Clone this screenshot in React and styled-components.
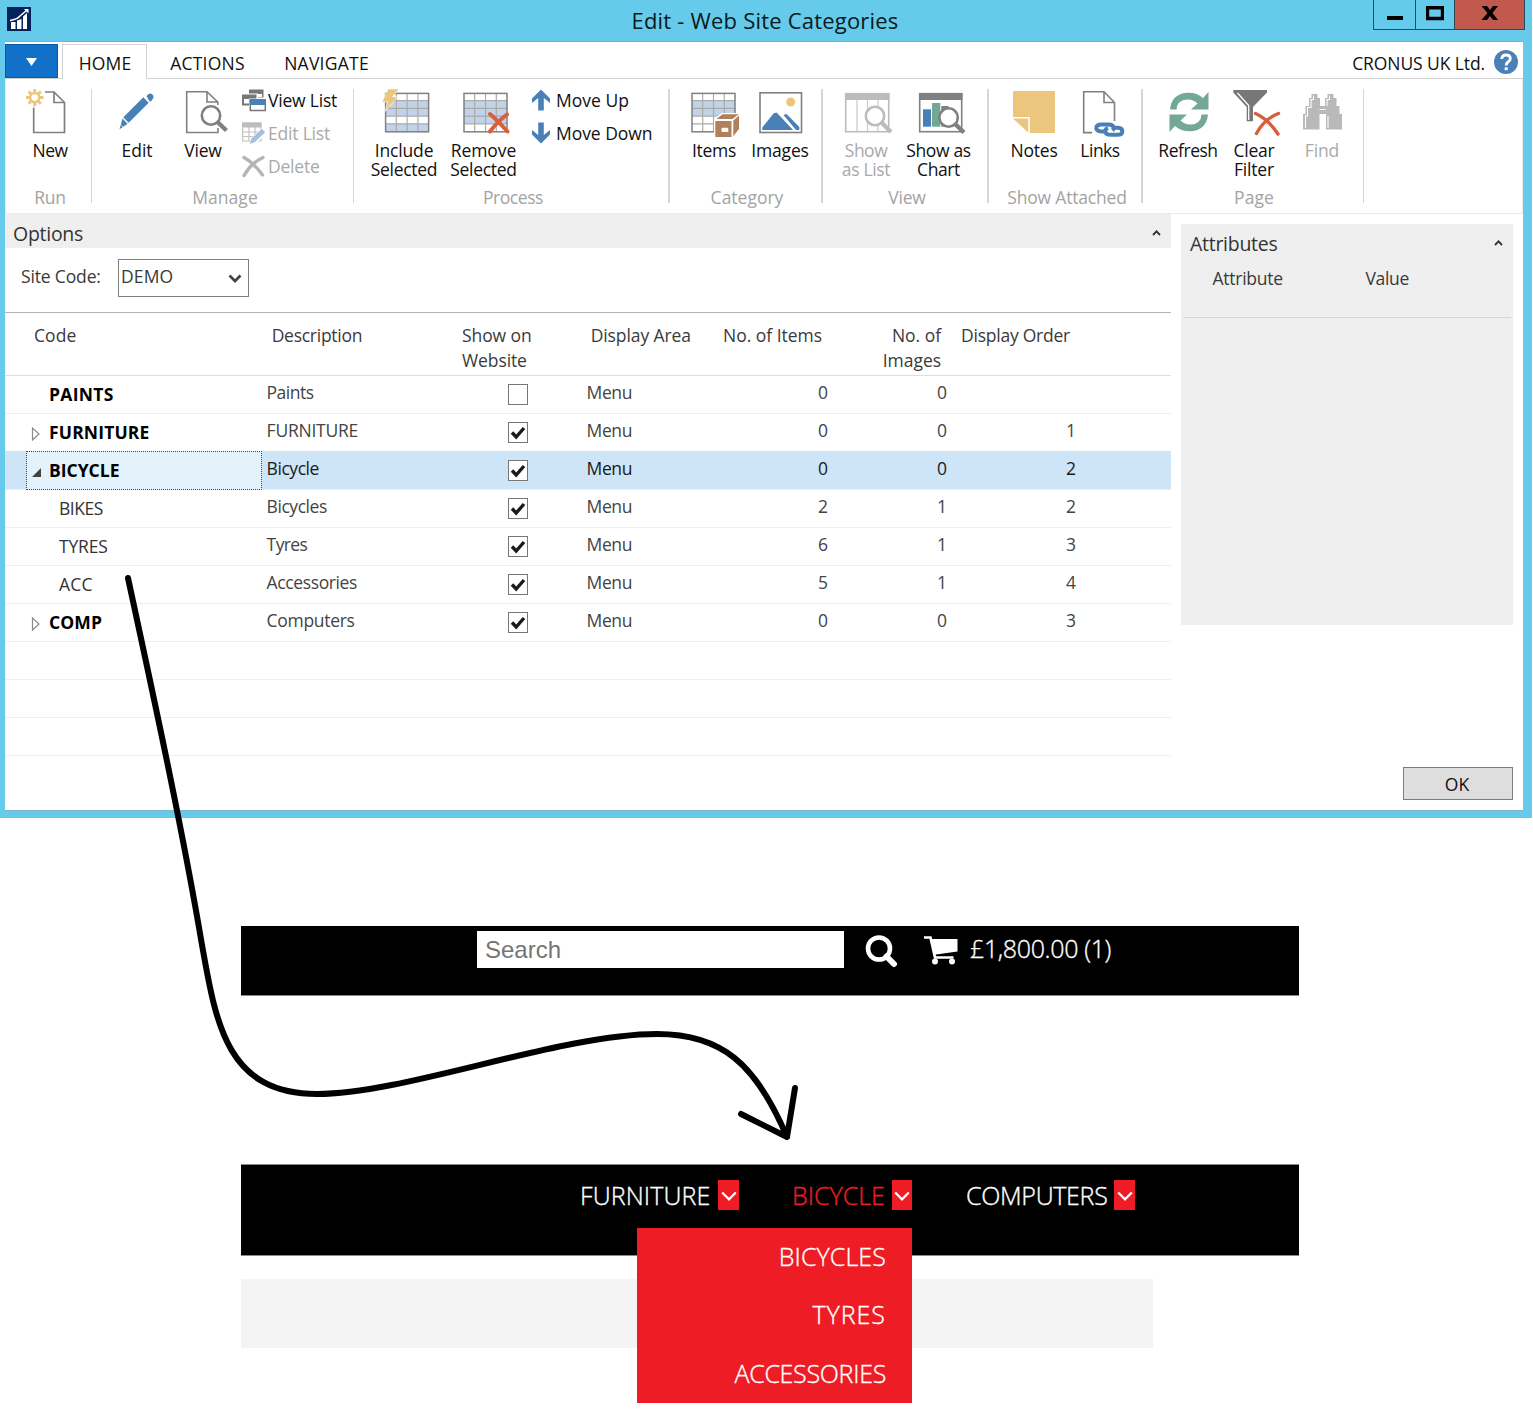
import React from 'react';
import styled, { createGlobalStyle, css } from 'styled-components';

const Global = createGlobalStyle`
  *, *::before, *::after { box-sizing: border-box; }
  body { margin: 0; background: #fff; }
  button, input { font: inherit; color: inherit; }
  svg { display: block; }
`;

const blue = '#4a80b8';
const grey = '#808080';
const sand = '#edc67e';
const red = '#d95f3c';
const pale = '#c0d3e8';

const Page = styled.div`
  position: relative;
  width: 1533px;
  height: 1414px;
  overflow: hidden;
  background: #fff;
  font-family: 'Open Sans', 'Noto Sans', sans-serif;
  font-size: 17.5px;
  color: #111;
`;

/* ---------- window chrome ---------- */

const Window = styled.section`
  width: 1532px;
  height: 818px;
  padding: 0 9px 7px 5px;
  background: #66caea;
  display: flex;
  flex-direction: column;
`;

const TitleBar = styled.header`
  height: 41px;
  flex: none;
  display: grid;
  grid-template-columns: 200px 1fr 200px;
  margin-right: -2px;
`;

const AppIcon = styled.svg`
  margin: 7px 0 0 2px;
`;

const Title = styled.h1`
  margin: 0;
  font-size: 22px;
  font-weight: 400;
  line-height: 41px;
  letter-spacing: 0.2px;
  text-align: center;
  color: #0a1a20;
`;

const WindowButtons = styled.div`
  display: flex;
  justify-content: flex-end;
  height: 30px;
`;

const WindowButton = styled.button`
  width: ${(p) => p.$w}px;
  height: 30px;
  padding: 0;
  border: 1px solid #2f4a55;
  border-top: 0;
  margin-left: -1px;
  background: ${(p) => (p.$close ? '#c1594f' : 'transparent')};
  display: flex;
  justify-content: center;
`;

const Client = styled.main`
  flex: 1;
  border-top: 1px solid #8fa9b8;
  border-bottom: 1px solid #7fb6cc;
  background: #fff;
  display: flex;
  flex-direction: column;
`;

/* ---------- ribbon ---------- */

const Tabs = styled.nav`
  display: flex;
  height: 37px;
  border-bottom: 1px solid #d2d2d2;
  padding-top: 2px;
`;

const FileTab = styled.button`
  width: 53px;
  height: 34px;
  border: 1px solid #0a5aa8;
  background: #1170c8;
  padding: 0;
  display: flex;
  justify-content: center;
`;

const Tab = styled.button`
  width: ${(p) => p.$w}px;
  height: 35px;
  padding: 0 0 0 1px;
  border: 0;
  background: none;
  line-height: 39px;
  letter-spacing: ${(p) => p.$ls}px;
  text-align: center;
  ${(p) =>
    p.$active &&
    css`
      margin-left: 4px;
      border: 1px solid #d2d2d2;
      border-bottom: 0;
      background: #fff;
      line-height: 37px;
    `}
`;

const Company = styled.div`
  margin-left: auto;
  padding-right: 5px;
  display: flex;
  gap: 9px;
  line-height: 38px;
  letter-spacing: -0.1px;
`;

const HelpIcon = styled.svg`
  margin-top: 6px;
`;

const Ribbon = styled.div`
  display: flex;
  height: 135px;
  flex: none;
  padding-top: 10px;
  border: 1px solid #e9e9e9;
  border-top: 0;
`;

const Group = styled.div`
  width: ${(p) => p.$w}px;
  height: 114px;
  border-right: ${(p) => p.$line || 1}px solid #d6d6d6;
  display: flex;
  flex-direction: column;
`;

const GroupItems = styled.div`
  display: flex;
  flex: none;
  height: 97px;
  padding-left: ${(p) => p.$pad}px;
`;

const GroupName = styled.div`
  line-height: 23px;
  color: #a3a3a3;
  text-align: center;
  padding-left: ${(p) => p.$shift || 0}px;
  letter-spacing: ${(p) => p.$ls || 0}px;
`;

const BigButton = styled.button`
  width: ${(p) => p.$w}px;
  padding: 0;
  border: 0;
  background: none;
  display: flex;
  flex-direction: column;
  align-items: center;
  line-height: 19px;
  color: ${(p) => (p.$off ? '#a9a9a9' : '#111')};
  margin-top: -3px;

  svg {
    flex: none;
    margin-bottom: 1px;
  }
`;

const ButtonLine = styled.span`
  white-space: nowrap;
  letter-spacing: ${(p) => p.$ls}px;
`;

const Stack = styled.div`
  display: flex;
  flex-direction: column;
  margin: -5.5px 0 0 ${(p) => p.$ml}px;
`;

const SmallButton = styled.button`
  height: 33px;
  padding: 0;
  border: 0;
  background: none;
  display: flex;
  align-items: center;
  gap: 2px;
  letter-spacing: ${(p) => p.$ls}px;
  color: ${(p) => (p.$off ? '#a9a9a9' : '#111')};
`;

/* ---------- page body ---------- */

const Body = styled.div`
  display: flex;
  flex: 1;
`;

const ListPane = styled.div`
  width: 1166px;
`;

const PaneHeader = styled.div`
  display: flex;
  justify-content: space-between;
  height: 34px;
  padding: 0 10px 0 ${(p) => p.$pl}px;
  background: #efefef;
  font-size: 19.5px;
  line-height: ${(p) => p.$lh}px;
  letter-spacing: -0.27px;
  color: #333;
`;

const CaretIcon = styled.svg`
  margin-top: 16px;
`;

const Filters = styled.div`
  display: flex;
  height: 64px;
  padding: 11px 0 0 16px;
  color: #3a3a3a;
`;

const FilterLabel = styled.label`
  width: 97px;
  line-height: 35px;
  letter-spacing: -0.15px;
`;

const Select = styled.div`
  display: flex;
  justify-content: space-between;
  width: 131px;
  height: 38px;
  padding: 0 6px 0 2px;
  border: 1px solid #7d7d7d;
  line-height: 33px;
  letter-spacing: 0.15px;
`;

const SelectArrow = styled.svg`
  margin-top: 14px;
`;

const columns = css`
  display: grid;
  grid-template-columns: 257px 195px 120px 131px 120px 119px 129px 1fr;
`;

const HeadRow = styled.div`
  ${columns}
  height: 63px;
  padding-top: 10px;
  border-top: 1px solid #b4b4b4;
  line-height: 25px;
  color: #3a3a3a;
`;

const HeadCell = styled.div`
  padding-left: ${(p) => p.$pl || 0}px;
  padding-right: ${(p) => p.$pr || 0}px;
  text-align: ${(p) => (p.$right ? 'right' : 'left')};
  letter-spacing: ${(p) => p.$ls || 0}px;
  white-space: nowrap;
`;

const Row = styled.div`
  ${columns}
  height: 38px;
  border-top: 1px solid ${(p) => (p.$first ? '#dedede' : '#efefef')};
  line-height: 33px;
  color: ${(p) => (p.$selected ? '#1a1a1a' : '#444')};
  ${(p) =>
    p.$selected &&
    css`
      border-top-color: #cbe4f6;
      background: #cde5f7;
    `}
`;

const CodeCell = styled.div`
  display: flex;
  margin: -1px 0 0 21px;
  height: 39px;
  border: 1px ${(p) => (p.$focus ? 'dotted #444' : 'solid transparent')};
  background: ${(p) => (p.$focus ? '#e4f2fb' : 'transparent')};
  line-height: 36px;
`;

const Expander = styled.svg`
  width: 14px;
  height: 16px;
  margin: 11px 5px 0 3px;
`;

const Code = styled.span`
  margin-left: ${(p) => (p.$child ? 10 : 0)}px;
  font-weight: ${(p) => (p.$child ? 400 : 700)};
  color: ${(p) => (p.$child ? '#333' : '#000')};
  letter-spacing: ${(p) => p.$ls}px;
`;

const Cell = styled.div`
  padding-left: ${(p) => p.$pl || 0}px;
  text-align: ${(p) => (p.$right ? 'right' : 'left')};
  letter-spacing: ${(p) => p.$ls || 0}px;
`;

const CheckBox = styled.span`
  display: block;
  width: 20px;
  height: 21px;
  margin: 8px 0 0 51px;
  border: 1px solid #777;
  background: #fff;
`;

const LastLine = styled.div`
  height: 1px;
  background: #efefef;
`;

const SidePane = styled.aside`
  flex: 1;
  padding: 10px 10px 10px 10px;
  display: flex;
  flex-direction: column;
  justify-content: space-between;
  align-items: flex-end;
`;

const FactBox = styled.div`
  width: 332px;
  height: 401px;
  background: #efefef;
`;

const FactHead = styled.div`
  display: grid;
  grid-template-columns: 153px 1fr;
  margin: 0 2px 0 2px;
  padding: 7px 0 0 29.5px;
  height: 60px;
  border-bottom: 1px solid #d6d6d6;
  line-height: 27px;
  color: #3a3a3a;
`;

const OkButton = styled.button`
  width: 110px;
  height: 33px;
  padding: 0 2px 0 0;
  border: 1px solid #7c7c7c;
  background: #dedede;
  line-height: 33px;
`;

/* ---------- web shop ---------- */

const ShopTop = styled.section`
  display: flex;
  width: 1058px;
  height: 70px;
  margin: 108px 0 0 241px;
  padding: 5px 0 0 236px;
  background: #000;
  border-bottom: 1px solid #888;
  color: #fff;
`;

const SearchInput = styled.input`
  width: 367px;
  height: 37px;
  border: 0;
  padding: 0 8px;
  background: #fff;
  font-family: 'Liberation Sans', Arial, sans-serif;
  font-size: 24px;
  line-height: 36px;

  &::placeholder {
    color: #757575;
    opacity: 1;
  }
`;

const SearchIcon = styled.svg`
  margin: 3px 0 0 20px;
`;

const CartIcon = styled.svg`
  margin: 5px 0 0 26px;
`;

const CartTotal = styled.span`
  margin-left: 12px;
  font-size: 25px;
  line-height: 35px;
  font-weight: 300;
  letter-spacing: -0.35px;
  -webkit-text-stroke: 0.35px currentColor;
`;

const ShopNav = styled.nav`
  display: flex;
  width: 1058px;
  height: 92px;
  margin: 168px 0 0 241px;
  padding: 15px 0 0 340px;
  background: #000;
  border: solid #888;
  border-width: 1px 0;
`;

const NavItem = styled.div`
  position: relative;
  display: flex;
  justify-content: space-between;
  width: ${(p) => p.$w}px;
  height: 30px;
  margin-right: ${(p) => p.$gap || 0}px;
  font-size: 25px;
  font-weight: 300;
  line-height: 31px;
  letter-spacing: ${(p) => p.$ls}px;
  color: ${(p) => (p.$open ? '#ee1c25' : '#fff')};
  white-space: nowrap;
  -webkit-text-stroke: 0.35px currentColor;
`;

const NavLabel = styled.span`
  margin-left: -1px;
`;

const Toggle = styled.span`
  width: ${(p) => p.$w}px;
  height: 30px;
  background: #ee1c25;
  display: flex;
  justify-content: center;
`;

const ToggleArrow = styled.svg`
  margin-top: 11px;
`;

const Dropdown = styled.div`
  position: absolute;
  z-index: 2;
  top: 48px;
  right: 0;
  width: 275px;
  height: 175px;
  background: #ee1c25;
  color: #fff;
  display: grid;
  grid-template-rows: repeat(3, 58.4px);
  padding-right: 26px;
  line-height: 56px;
  text-align: right;
  -webkit-text-stroke: 0.35px #fff;
`;

const MenuLink = styled.span`
  letter-spacing: ${(p) => p.$ls}px;
`;

const ShopStrip = styled.div`
  width: 912px;
  height: 69px;
  margin: 23px 0 0 241px;
  background: #f4f4f4;
`;

const Pointer = styled.svg`
  position: absolute;
  z-index: 3;
  top: 560px;
  left: 110px;
  pointer-events: none;
`;

/* ---------- drawings ---------- */

const Big = ({ children }) => (
  <svg width="56" height="54" viewBox="0 0 56 54" overflow="visible" fill="none">
    {children}
  </svg>
);

const Small = ({ children }) => (
  <svg width="24" height="24" viewBox="0 0 24 24" fill="none">
    {children}
  </svg>
);

const Lens = ({ x, y, c = grey, tx, ty }) => (
  <g stroke={c}>
    <circle cx={x} cy={y} r="9.2" strokeWidth="2.6" fill="#fff" />
    <path d={`M${x + 6.5} ${y + 6.5}L${tx} ${ty}`} strokeWidth="4.4" />
  </g>
);

const Sheet = ({ x, blueRows }) => (
  <g>
    <rect x={x} y="7" width="43" height="38.6" fill="#fff" />
    {blueRows.map((r) => (
      <rect key={r} x={x} y={7 + r * 7.7} width="43" height="7.7" fill={pale} />
    ))}
    <path
      d={`M${x + 10.7} 7v38.6m10.8-38.6v38.6m10.8-38.6v38.6M${x} 14.7h43m-43 7.7h43m-43 7.7h43m-43 7.7h43`}
      stroke="#ababab"
      strokeWidth="1.2"
    />
    <rect x={x} y="7.4" width="43" height="38.4" stroke={grey} strokeWidth="1.5" />
  </g>
);

const icons = {
  New: (
    <Big>
      <path d="M23 6H32L42.500 16.500V46.500H11.700V21.500M32 6V16.500H42.500" stroke={grey} strokeWidth="1.7" />
      <g stroke={sand}>
        <circle cx="12.700" cy="11.600" r="4.600" strokeWidth="2.600" />
        <path d="M12.700 3v4m0 9.200v4M4 11.600h4m9.400 0h4M6.600 5.500l2.900 2.900m6.400 6.400l2.900 2.900M6.600 17.700l2.900-2.900m6.400-6.400l2.900-2.900" strokeWidth="3" />
      </g>
    </Big>
  ),
  Edit: (
    <Big>
      <path d="M37 14L17 34" stroke={blue} strokeWidth="7.600" />
      <path d="M37.500 10L40 7.700Q43 6.500 44.500 10Q45 12.500 42.600 14.800L40.800 15.900Z M13.600 32L19 37.600L10.500 43.300Z" fill={blue} />
      <path d="M35.600 10.600L42 17M12.400 31.200L19.600 38.400" stroke="#fff" strokeWidth=".8" />
      <path d="M11.600 38.600L15.600 42.300" stroke="#fff" strokeWidth=".6" />
    </Big>
  ),
  View: (
    <Big>
      <path d="M42.800 19V16L32 5.700H11.700V46.500H43V42M32 5.700V16H42.800" stroke={grey} strokeWidth="1.600" />
      <Lens x={36} y={29.500} tx={51.500} ty={44.500} />
    </Big>
  ),
  Include: (
    <Big>
      <Sheet x={9.600} blueRows={[1, 2, 4]} />
      <path d="M12 3H23L16.500 10.700H22L9 25.500L11.500 16H6Z" fill={sand} stroke="#fff" strokeWidth=".6" />
    </Big>
  ),
  Remove: (
    <Big>
      <Sheet x={8} blueRows={[1, 2, 3]} />
      <path d="M34 28Q42 35 51.500 45.500M51 28.500Q42 35 34 45.500" stroke={red} strokeWidth="4" strokeLinecap="round" />
    </Big>
  ),
  Items: (
    <Big>
      <Sheet x={6} blueRows={[1, 2]} />
      <path d="M28 33L36 27H54V43L46 52H28Z" fill="#fff" />
      <path d="M29.300 35H45.500V51H29.300ZM30.500 33L36.500 28.300H52.700L46.500 33ZM47.300 34.500L53 29.500V43L47.300 50.300Z" fill="#b0805a" />
      <path d="M36 42.300H41.800V45.500H36Z" fill="#fff" stroke="#fff" />
    </Big>
  ),
  Images: (
    <Big>
      <rect x="8" y="6.800" width="41.500" height="39.700" stroke={grey} strokeWidth="1.600" />
      <circle cx="38.700" cy="16" r="4.500" fill={sand} />
      <path d="M10.300 44V41.500L21.500 27.500L24.500 26.500L28 30L41 44Z M31.500 29L34.500 28L37 30.500L47.300 41V44H44Z" fill={blue} />
    </Big>
  ),
  List: (
    <Big>
      <path d="M19 14V45M29.500 14V45M40 14V45" stroke="#cdcdcd" strokeWidth="1.300" />
      <rect x="7.700" y="7.700" width="43" height="38" stroke="#bcbcbc" strokeWidth="1.600" />
      <path d="M7 7H51.500V14H7Z" fill="#bcbcbc" />
      <Lens x={37} y={30} tx={53} ty={46} c="#bcbcbc" />
    </Big>
  ),
  Chart: (
    <Big>
      <rect x="8.700" y="7.700" width="42" height="38" stroke={grey} strokeWidth="1.600" />
      <path d="M8 7H51.500V14H8Z" fill={grey} />
      <path d="M12 23.300H20V40.700H12Z" fill={blue} />
      <path d="M21 17H29.300V40.700H21Z" fill="#74a896" />
      <path d="M30.300 20H37.500V40.700H30.300Z" fill={grey} />
      <Lens x={37.600} y={31.500} tx={53} ty={46.500} />
    </Big>
  ),
  Notes: (
    <Big>
      <path d="M7 5H49V47H23.500V31.700H7Z" fill={sand} />
      <path d="M7 32.500H22.500V47Z" fill={sand} />
      <path d="M7 31.500H23V47" stroke="#fff" strokeWidth="1.200" />
    </Big>
  ),
  Links: (
    <Big>
      <path d="M20 46.600H11.700V5.700H32L42.500 16.500V35M32 5.700V16.500H42.500" stroke={grey} strokeWidth="1.600" />
      <g stroke={blue} strokeWidth="4">
        <path d="M33.500 45.500H29.500Q24.300 45 24.300 42Q24.300 38.500 29.500 38.500H36.500Q41.500 38.500 41.500 42Q41.500 43.500 40.500 44.500" />
        <path d="M43 41.800H46Q50.300 42 50.300 45.300Q50.300 48.800 45.500 48.800H39Q33.500 48.800 33.300 45.300Q33.300 43 36 42" />
      </g>
    </Big>
  ),
  Refresh: (
    <Big>
      <g fill="#74a896">
        <path d="M10 23.500Q11.500 8 27 6.700Q37 6.300 43 12L48.500 6V23.500H31L37.500 17.500Q33 13 26.500 13.500Q17 14.500 16.500 23.500Z" />
        <path d="M48 28.500Q46.500 44 31 45.300Q21 45.700 15 40L9.500 46V28.500H27L20.500 34.500Q25 39 31.500 38.500Q41 37.500 41.500 28.500Z" />
      </g>
    </Big>
  ),
  Clear: (
    <Big>
      <path d="M7.300 4H41V6.500L27 21V35.300H20.700V21L7.300 6.500Z" fill="#777" />
      <path d="M11.500 7L22.700 19.500V34" stroke="#fff" strokeWidth="1.300" />
      <path d="M29.500 27.500Q42 33 52 48M52.500 27.500Q38 33 30.500 47.500" stroke={red} strokeWidth="3.400" strokeLinecap="round" />
    </Big>
  ),
  Find: (
    <Big>
      <path
        d="M17.500 8H23.500V12H26V20H31V12H33.500V8H39.500V12H42.500V20H45.500V28H48V43.500H32V28H25.500V43.500H9V28H11.500V20H15V12H17.500Z"
        fill="#b9b9b9"
      />
      <path d="M11.500 42V30H13.500V21.500H17V13.500H19.500V9.500M34 42V30M33 20V13.500H35.500V9.500M25.500 23.500H31.500" stroke="#fff" strokeWidth="1.100" />
    </Big>
  ),
  ViewList: (
    <Small>
      <path d="M7 1.500H21.500V9.500H16V5.500H7ZM0 6.500H14.500V10.500H7V17.500H0Z" fill="#777" />
      <path d="M16 6H20V9H16ZM2 11H7V15.500H2Z" fill="#fff" />
      <rect x="8.300" y="11.800" width="15" height="10.700" fill="#fff" stroke="#777" strokeWidth="1.500" />
      <path d="M7.600 11H24V17H7.600Z" fill={blue} />
    </Small>
  ),
  EditList: (
    <Small>
      <path d="M.7 2H19V20H.7ZM.7 11H19M.7 15.500H19M7 6V20M13 6V20" stroke="#c2c2c2" strokeWidth="1.200" />
      <path d="M0 1.500H19.500V6.500H0Z" fill="#bdbdbd" />
      <path d="M22.500 9L10 21.500" stroke="#fff" strokeWidth="7" />
      <path d="M21.500 9.500L11 19.500" stroke="#a5c0dd" strokeWidth="5" />
      <path d="M7.500 23L9.500 17.500L13 21Z" fill="#a5c0dd" />
    </Small>
  ),
  Delete: (
    <Small>
      <path d="M2 3.500Q12 9 20.500 21M21 3.500Q9 9 2 21.500" stroke="#b5b5b5" strokeWidth="3.300" strokeLinecap="round" />
    </Small>
  ),
  Up: (
    <Small>
      <path d="M11 1.500L20 10.500V15L13.800 10V22.500H8.200V10L2 15V10.500Z" fill={blue} />
    </Small>
  ),
  Down: (
    <Small>
      <path d="M11 22.500L20 13.500V9L13.800 14V1.500H8.200V14L2 9V13.500Z" fill={blue} />
    </Small>
  ),
};

const Caret = () => (
  <CaretIcon width="9" height="6" viewBox="0 0 9 6" fill="none">
    <path d="M1 5L4.500 1.400L8 5" stroke="#333" strokeWidth="1.800" />
  </CaretIcon>
);

const Chevron = () => (
  <ToggleArrow width="16" height="10" viewBox="0 0 16 10" fill="none">
    <path d="M1.200 1.500L8 8.300L14.800 1.500" stroke="#fff" strokeWidth="2.300" />
  </ToggleArrow>
);

/* ---------- data ---------- */

const groups = [
  { name: 'Run', w: 86, pad: 6, big: [{ icon: 'New', w: 76, lines: [['New', -0.5]] }], ls: -0.2, shift: 3 },
  {
    name: 'Manage', w: 262, pad: 12, ls: 0.05, shift: 5,
    big: [
      { icon: 'Edit', w: 66, lines: [['Edit', 0]] },
      { icon: 'View', w: 66, lines: [['View', -0.2]] },
    ],
    gap: 6,
    small: [
      { icon: 'ViewList', text: 'View List', ls: -0.2 },
      { icon: 'EditList', text: 'Edit List', ls: -0.2, off: true },
      { icon: 'Delete', text: 'Delete', ls: -0.2, off: true },
    ],
  },
  {
    name: 'Process', w: 316, pad: 10, ls: -0.45, shift: 4, line: 2,
    big: [
      { icon: 'Include', w: 80, lines: [['Include', -0.14], ['Selected', -0.3]] },
      { icon: 'Remove', w: 79, lines: [['Remove', -0.1], ['Selected', -0.3]] },
    ],
    gap: 7,
    small: [
      { icon: 'Up', text: 'Move Up', ls: 0 },
      { icon: 'Down', text: 'Move Down', ls: -0.05 },
    ],
  },
  {
    name: 'Category', w: 153, pad: 11, ls: 0, shift: 3, line: 2,
    big: [
      { icon: 'Items', w: 66, lines: [['Items', -0.29]] },
      { icon: 'Images', w: 66, lines: [['Images', -0.15]] },
    ],
  },
  {
    name: 'View', w: 166, pad: 7, ls: -0.23, shift: 4, line: 2,
    big: [
      { icon: 'List', w: 72, off: true, lines: [['Show', -0.5], ['as List', -0.35]] },
      { icon: 'Chart', w: 73, lines: [['Show as', -0.35], ['Chart', -0.4]] },
    ],
  },
  {
    name: 'Show Attached', w: 154, pad: 12, ls: -0.18, shift: 4, line: 2,
    big: [
      { icon: 'Notes', w: 66, lines: [['Notes', -0.19]] },
      { icon: 'Links', w: 66, lines: [['Links', -0.5]] },
    ],
  },
  {
    name: 'Page', w: 221, pad: 12, ls: 0.08, shift: 2,
    big: [
      { icon: 'Refresh', w: 66, lines: [['Refresh', -0.47]] },
      { icon: 'Clear', w: 66, lines: [['Clear', -0.25], ['Filter', -0.19]] },
      { icon: 'Find', w: 70, off: true, lines: [['Find', -0.15]] },
    ],
  },
];

const rows = [
  { code: 'PAINTS', cls: 0.3, text: 'Paints', ls: -0.5, shown: false, items: 0, images: 0, order: '' },
  { code: 'FURNITURE', cls: 0.15, text: 'FURNITURE', ls: -0.23, shown: true, items: 0, images: 0, order: 1, node: 'closed' },
  { code: 'BICYCLE', cls: 0, text: 'Bicycle', ls: -0.45, shown: true, items: 0, images: 0, order: 2, node: 'open', selected: true },
  { code: 'BIKES', cls: -0.45, text: 'Bicycles', ls: -0.45, shown: true, items: 2, images: 1, order: 2, child: true },
  { code: 'TYRES', cls: -0.15, text: 'Tyres', ls: -0.6, shown: true, items: 6, images: 1, order: 3, child: true },
  { code: 'ACC', cls: 0.2, text: 'Accessories', ls: -0.38, shown: true, items: 5, images: 1, order: 4, child: true },
  { code: 'COMP', cls: 0.14, text: 'Computers', ls: -0.3, shown: true, items: 0, images: 0, order: 3, node: 'closed' },
];

function RibbonGroup({ group }) {
  return (
    <Group $w={group.w} $line={group.line}>
      <GroupItems $pad={group.pad}>
        {group.big.map((b) => (
          <BigButton key={b.icon} $w={b.w} $off={b.off}>
            {icons[b.icon]}
            {b.lines.map(([text, ls]) => (
              <ButtonLine key={text} $ls={ls}>{text}</ButtonLine>
            ))}
          </BigButton>
        ))}
        {group.small && (
          <Stack $ml={group.gap}>
            {group.small.map((s) => (
              <SmallButton key={s.text} $ls={s.ls} $off={s.off}>
                {icons[s.icon]}
                {s.text}
              </SmallButton>
            ))}
          </Stack>
        )}
      </GroupItems>
      <GroupName $ls={group.ls} $shift={group.shift}>{group.name}</GroupName>
    </Group>
  );
}

function CategoryRow({ row, first }) {
  return (
    <Row $first={first} $selected={row.selected}>
      <CodeCell $focus={row.selected}>
        <Expander viewBox="0 0 14 16" fill="none">
          {row.node === 'closed' && <path d="M2.500 3V15L9 9Z" stroke="#8a8a8a" strokeWidth="1.200" />}
          {row.node === 'open' && <path d="M11 5V14H2Z" fill="#444" />}
        </Expander>
        <Code $child={row.child} $ls={row.cls}>{row.code}</Code>
      </CodeCell>
      <Cell $pl={4.6} $ls={row.ls}>{row.text}</Cell>
      <div>
        <CheckBox>
          {row.shown && (
            <svg width="18" height="19" viewBox="0 0 18 19" fill="none">
              <path d="M3 9.500L7.200 14L15 5" stroke="#1a1a1a" strokeWidth="3.400" />
            </svg>
          )}
        </CheckBox>
      </div>
      <Cell $pl={9.5} $ls={-0.35}>Menu</Cell>
      <Cell $right>{row.items}</Cell>
      <Cell $right>{row.images}</Cell>
      <Cell $right>{row.order}</Cell>
    </Row>
  );
}

export default function App() {
  return (
    <Page>
      <Global />
      <Window>
        <TitleBar>
          <AppIcon width="24" height="24" viewBox="0 0 24 24" fill="none">
            <path d="M0 0H24V24H0Z" fill="#04235a" />
            <path d="M4 15H8.500V22H4ZM10 13.500L14.500 12V22H10ZM16 9.500L20 6V22H16Z" fill="#fff" />
            <path d="M3 13.500Q10 12.500 13 9L19.500 3.500" stroke="#fff" strokeWidth="1.500" />
            <path d="M17 2H21.500V6.500Z" fill="#fff" />
          </AppIcon>
          <Title>Edit - Web Site Categories</Title>
          <WindowButtons>
            <WindowButton $w={43}>
              <svg width="16" height="29" viewBox="0 0 16 29"><path d="M0 16H16V20H0Z" /></svg>
            </WindowButton>
            <WindowButton $w={40}>
              <svg width="18" height="29" viewBox="0 0 18 29" fill="none"><path d="M1.500 7.700H16.500V18.500H1.500Z" stroke="#000" strokeWidth="3.400" /></svg>
            </WindowButton>
            <WindowButton $w={71} $close>
              <svg width="18" height="29" viewBox="0 0 18 29"><path d="M.500 6H6L9 10L12 6H17L11.500 13L17 20H12L9 16L6 20H.500L6.500 13Z" /></svg>
            </WindowButton>
          </WindowButtons>
        </TitleBar>
        <Client>
          <Tabs>
            <FileTab>
              <svg width="13" height="32" viewBox="0 0 13 32"><path d="M1 13H12L6.500 21Z" fill="#fff" /></svg>
            </FileTab>
            <Tab $active $w={85} $ls={0.15}>HOME</Tab>
            <Tab $w={120} $ls={0.2}>ACTIONS</Tab>
            <Tab $w={118} $ls={0.25}>NAVIGATE</Tab>
            <Company>
              CRONUS UK Ltd.
              <HelpIcon width="24" height="24" viewBox="0 0 24 24" fill="none">
                <circle cx="12" cy="12" r="12" fill={blue} />
                <path d="M7.800 9Q8 5 12 5Q16.300 5 16.300 8.700Q16.300 10.700 14 12Q12.200 13.200 12.200 15.500" stroke="#fff" strokeWidth="2.800" />
                <path d="M10.700 17.300H13.700V20.200H10.700Z" fill="#fff" />
              </HelpIcon>
            </Company>
          </Tabs>
          <Ribbon>
            {groups.map((g) => <RibbonGroup key={g.name} group={g} />)}
          </Ribbon>
          <Body>
            <ListPane>
              <PaneHeader $pl={8} $lh={39}>
                <span>Options</span>
                <Caret />
              </PaneHeader>
              <Filters>
                <FilterLabel>Site Code:</FilterLabel>
                <Select>
                  DEMO
                  <SelectArrow width="14" height="10" viewBox="0 0 14 10" fill="none">
                    <path d="M1.500 1.500L7 7L12.500 1.500" stroke="#444" strokeWidth="2.700" />
                  </SelectArrow>
                </Select>
              </Filters>
              <HeadRow>
                <HeadCell $pl={29} $ls={0.1}>Code</HeadCell>
                <HeadCell $pl={9.7} $ls={-0.27}>Description</HeadCell>
                <HeadCell $pl={5} $ls={-0.1}>Show on<br />Website</HeadCell>
                <HeadCell $pl={13.7} $ls={-0.1}>Display Area</HeadCell>
                <HeadCell $right $pr={6} $ls={-0.03}>No. of Items</HeadCell>
                <HeadCell $right $pr={6} $ls={-0.03}>No. of<br />Images</HeadCell>
                <HeadCell $right $pr={6} $ls={-0.24}>Display Order</HeadCell>
              </HeadRow>
              {rows.map((row, i) => <CategoryRow key={row.code} row={row} first={i === 0} />)}
              <Row />
              <Row />
              <Row />
              <LastLine />
            </ListPane>
            <SidePane>
              <FactBox>
                <PaneHeader $pl={9} $lh={40}>
                  <span>Attributes</span>
                  <Caret />
                </PaneHeader>
                <FactHead>
                  <HeadCell $ls={-0.25}>Attribute</HeadCell>
                  <HeadCell $ls={-0.33}>Value</HeadCell>
                </FactHead>
              </FactBox>
              <OkButton>OK</OkButton>
            </SidePane>
          </Body>
        </Client>
      </Window>

      <ShopTop>
        <SearchInput placeholder="Search" />
        <SearchIcon width="34" height="34" viewBox="0 0 34 34" fill="none">
          <circle cx="15" cy="14.500" r="11" stroke="#fff" strokeWidth="4.600" />
          <path d="M22.500 22.500L30 30" stroke="#fff" strokeWidth="6" strokeLinecap="round" />
        </SearchIcon>
        <CartIcon width="34" height="29" viewBox="0 0 34 29" fill="none">
          <path d="M0 1.500H6.500L11 21.500H29.500" stroke="#fff" strokeWidth="2.700" />
          <path d="M7 3H33.500V15.500L10.500 18.800Z" fill="#fff" />
          <circle cx="11" cy="25.500" r="3" fill="#fff" />
          <circle cx="28" cy="25.500" r="3" fill="#fff" />
        </CartIcon>
        <CartTotal>£1,800.00 (1)</CartTotal>
      </ShopTop>

      <ShopNav>
        <NavItem $w={158} $gap={54} $ls={0.1}>
          <NavLabel>FURNITURE</NavLabel>
          <Toggle $w={21}><Chevron /></Toggle>
        </NavItem>
        <NavItem $w={119} $gap={55} $ls={0} $open>
          <NavLabel>BICYCLE</NavLabel>
          <Toggle $w={20}><Chevron /></Toggle>
          <Dropdown>
            <MenuLink $ls={0.1}>BICYCLES</MenuLink>
            <MenuLink $ls={1}>TYRES</MenuLink>
            <MenuLink $ls={-0.3}>ACCESSORIES</MenuLink>
          </Dropdown>
        </NavItem>
        <NavItem $w={168} $ls={-0.3}>
          <NavLabel>COMPUTERS</NavLabel>
          <Toggle $w={21}><Chevron /></Toggle>
        </NavItem>
      </ShopNav>
      <ShopStrip />

      <Pointer width="720" height="600" viewBox="110 560 720 600" fill="none">
        <path
          d="M128 578C157 712 184 838 202 945C216 1024 227 1094 317 1094C405 1094 560 1034 657 1034C722 1034 756 1064 787 1137M741 1114L787 1137L795 1088"
          stroke="#000"
          strokeWidth="6"
          strokeLinecap="round"
          strokeLinejoin="round"
        />
      </Pointer>
    </Page>
  );
}
